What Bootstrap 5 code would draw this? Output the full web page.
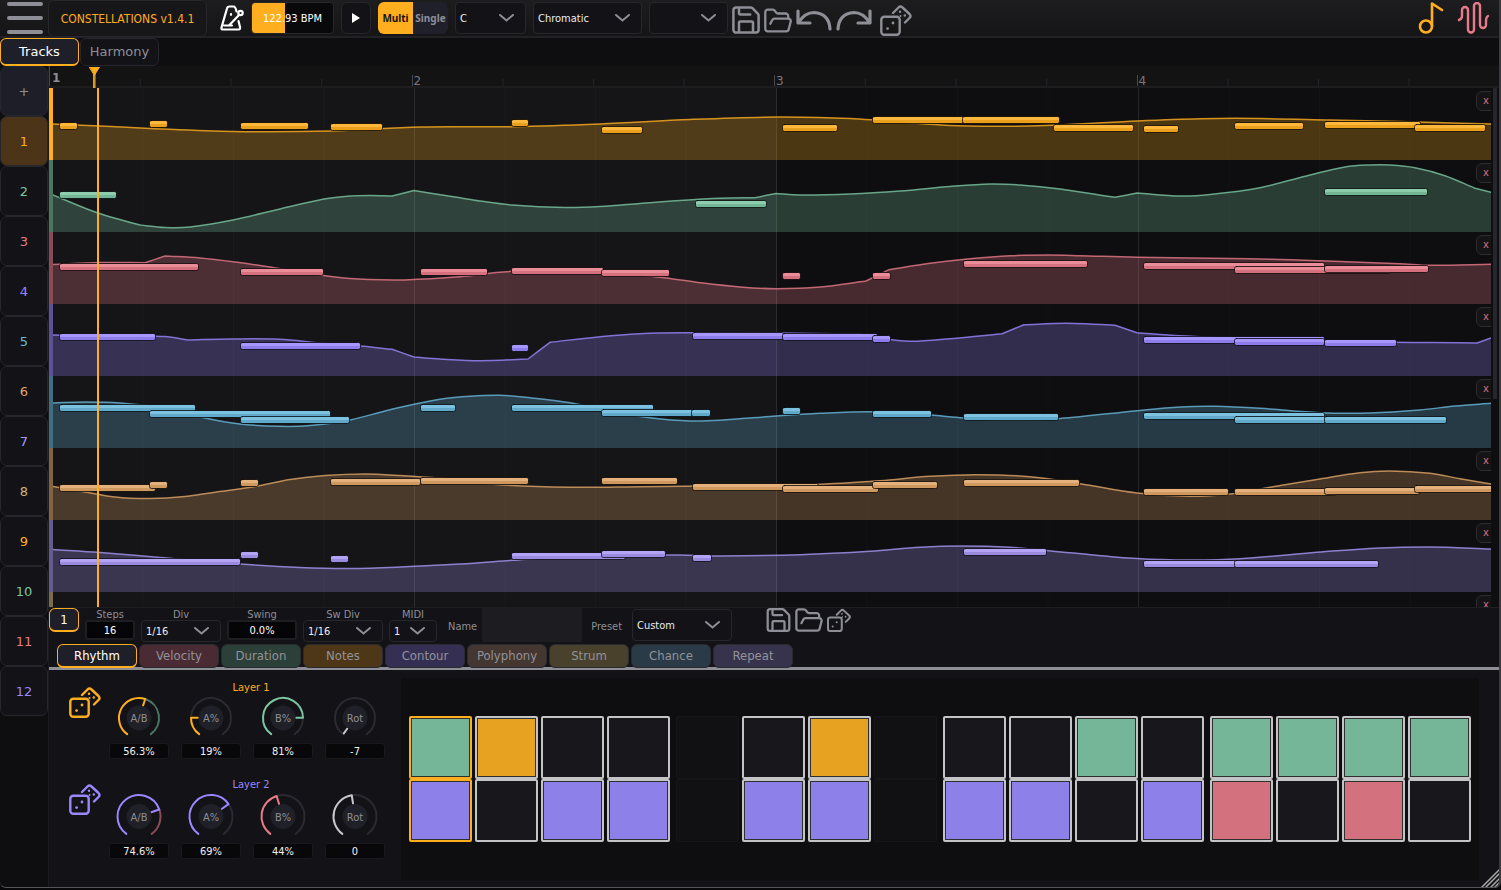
<!DOCTYPE html>
<html lang="en" data-bs-theme="dark">
<head>
<meta charset="utf-8">
<meta name="viewport" content="width=device-width, initial-scale=1">
<title>Constellations</title>
<link rel="stylesheet" href="https://cdn.jsdelivr.net/npm/bootstrap@5.3.0/dist/css/bootstrap.min.css">
<style>
:root{--amber:#ffae20;--green:#7cc6a2;--rose:#e87b8a;--violet:#9a87ff;--sky:#6ab8dc;--sand:#e0a568;--lilac:#a897f5;--khaki:#cbb77c;--ash:#8e8e96;--line:#26262c;--panel:#121217;--ink:#0e0e10}
body{background:#08080a;color:#ececee;font:11px/14px "DejaVu Sans Condensed","DejaVu Sans",sans-serif}
button,input,select{font:inherit;color:inherit;padding:0}
svg{display:block;fill:none;stroke:currentColor;stroke-linecap:round;stroke-linejoin:round}
.app{background:var(--ink);border-right:2px solid #3a3a3f;border-bottom:1px solid #55555a;border-radius:0 0 6px 6px;margin-bottom:2px;height:calc(100vh - 2px);overflow:hidden}
.grey{color:var(--ash)}
.icon-btn{background:none;border:0;color:var(--ash)}
.topbar{height:38px;background:linear-gradient(#1d1d20,#151517);border-bottom:2px solid #222226}
.burger{width:48px;height:36px;padding:2px 5px 2px 7px}
.burger span{height:4px;border-radius:2px;background:var(--ash)}
.brand-box{width:159px;height:37px;border:1px solid var(--line);border-radius:6px;font-size:12px;color:var(--amber);background:#17171a}
.transport{padding:2px 0 0 13px;gap:7px}
.modes{padding:2px 9px 0 0;gap:13px}
.ctl{height:32px;border:1px solid var(--line);border-radius:4px;background-color:var(--panel)}
.play{width:30px;border-radius:6px}
.bpm{width:83px;border:1px solid var(--line);background:linear-gradient(90deg,var(--amber) 41%,#09090b 41%);text-align:center;color:#fff}
.seg{width:70px;border-radius:6px;overflow:hidden;font:bold 10px/14px "Noto Sans",sans-serif}
.seg button{border:0;background:#20202a;color:var(--ash);flex:1}
.seg .on{background:var(--amber);color:#17130a}
.pick{appearance:none;border:1px solid var(--line);border-radius:4px;padding:2px 0 0 4px;background:var(--panel) url("data:image/svg+xml,%3Csvg xmlns='http://www.w3.org/2000/svg' width='15' height='8'%3E%3Cpath d='M1 1l6.500 5.500L14 1' fill='none' stroke='%238e8e96' stroke-width='2' stroke-linecap='round'/%3E%3C/svg%3E") no-repeat right 11px center}
.view-tab{width:79px;height:28px;border:1px solid var(--line);border-radius:6px;background:var(--panel);color:var(--ash);font:13px/16px "DejaVu Sans",sans-serif}
.on-tab{background:#1f1f29;border:1px solid var(--amber);border-bottom-width:2px;color:#fff}
.side{width:49px;border-right:1px solid #1d1d21}
.side button{width:48px;height:50px;flex:none;border:1px solid #26262d;border-width:1px 1px;border-radius:7px;background:var(--panel);font:13px/16px "DejaVu Sans",sans-serif;padding-top:2px}
.side .add{background:#1e1e28;color:var(--ash)}
.side .sel{background:#4b3417}
.ruler{height:22px;background:#131313;border-bottom:2px solid #1d1d1f}
.bar-no{padding:8px 0 0 2px;font:12px/14px "DejaVu Sans",sans-serif;color:#77777d;background:linear-gradient(#48484e,#48484e) 0 100%/1px 11px no-repeat,linear-gradient(90deg,#242427 1px,transparent 1px) 0 100%/25% 7px repeat-x}
.bar-no:first-child{padding:5px 0 0 3px;font-weight:bold;color:var(--ash);background-size:1px 22px,25% 7px}
.head-mark{position:absolute;left:40px;top:1px;color:var(--amber)}
.head-line{position:absolute;left:48px;top:0;bottom:0;width:2px;background:var(--amber)}
.lanes{min-height:0;flex:1 1 0}
.lane{height:72px;flex:none;border-left:4px solid}
.lane svg{width:100%;height:72px}
.lane-x{position:absolute;right:-5px;top:3px;width:20px;height:20px;border:1px solid #2b2b30;border-radius:6px;background:#151518;color:#d96f7e;line-height:14px}
.vscroll{width:8px}
.vscroll span{width:4px;height:60%;background:#26262f}
.lower{background:var(--panel);border-top:1px solid #1d1d22}
.settings{height:36px;gap:6px}
.trk{width:30px;height:24px;border-radius:6px;font-size:13px}
.field{line-height:14px;color:var(--ash)}
.field label{height:12px}
.field .num{height:20px;border:2px solid #1e1e22;border-radius:3px;background:#050507;text-align:center;color:#fff;padding-top:1px}
.field .pick{height:22px;color:#eee;padding-top:1px}
.w50{width:50px}.w70{width:70px}.w80{width:80px}.w48{width:48px}.w100{width:100px}
.naming{gap:5px;padding-left:5px}
.naming .pick{margin-left:5px}
.presets{padding-left:28px}
.named{height:34px;border:0;background:#1c1c21}
.edit-tabs{border-bottom:3px solid var(--ash);padding-left:8px;gap:2px}
.edit-tabs button{width:80px;height:24px;border:1px solid #2a2a31;border-radius:6px;font-size:13px;color:#92929a;margin-bottom:-1px}
.edit-tabs .on-tab{border:1px solid var(--amber);border-bottom-width:2px;color:#fff}
.knobs{width:352px;padding:11px 9px 0 20px}
.layer{height:97px}
.layer .icon-btn{margin:5px 2px 0 0}
.dial{width:72px}
.dial input{width:60px;height:16px;border:1px solid #1a1a1e;border-radius:3px;background:#08080a;text-align:center;color:#f0f0f0;padding-top:1px}
.dial text{stroke:none;fill:var(--ash);text-anchor:middle;font-size:11px}
.label-l{line-height:14px;height:12px;padding-left:8px}
.board{background:var(--ink);margin:8px 20px 7px 0;padding:0 8px;height:202px;gap:6px}
.beat{display:grid;grid-template-columns:repeat(4,1fr);column-gap:3px;flex:1}
.cell{height:63px;border:2px solid #c4c4c6;border-radius:2px;background:#18181c}
.cell.off{border:1px solid #16161a;background:#111113}
.cell.now{border-color:var(--amber)}
.c-g,.c-o,.c-v,.c-r{box-shadow:inset 0 0 0 1px #2e3030}
.c-g{background:#74b697}.c-o{background:#e8a222}.c-v{background:#8d80e8}.c-r{background:#d3717f}
.grip{position:absolute;right:0;bottom:0;color:#aaa}
</style>
</head>
<body>
<svg width="0" height="0" class="position-absolute" aria-hidden="true">
  <symbol id="dice" viewBox="0 0 32 32"><rect x="1.300" y="12.700" width="18.400" height="18" rx="3"/><path d="M13 9l5.500-5.500q2-2 4 0l7 6.500q2 2 0 4l-4.500 4.500"/><g fill="currentColor" stroke="none"><circle cx="13" cy="19" r="1.400"/><circle cx="7.600" cy="24.600" r="1.400"/><circle cx="20" cy="7.700" r="1.200"/><circle cx="24.800" cy="11.500" r="1.200"/><circle cx="20.500" cy="12" r="1"/></g></symbol>
  <symbol id="disk" viewBox="2 2 20 20"><path d="M15.200 3a2 2 0 0 1 1.400.6l3.800 3.800a2 2 0 0 1 .6 1.400V19a2 2 0 0 1-2 2H5a2 2 0 0 1-2-2V5a2 2 0 0 1 2-2zM17 21v-7a1 1 0 0 0-1-1H8a1 1 0 0 0-1 1v7M7 3v4a1 1 0 0 0 1 1h7"/></symbol>
  <symbol id="folder" viewBox="1 2 22 19"><path d="M6 14l1.500-2.900A2 2 0 0 1 9.240 10H20a2 2 0 0 1 1.940 2.500l-1.540 6a2 2 0 0 1-1.950 1.500H4a2 2 0 0 1-2-2V5a2 2 0 0 1 2-2h3.900a2 2 0 0 1 1.690.9l.81 1.200a2 2 0 0 0 1.670.9H18a2 2 0 0 1 2 2v2"/></symbol>
  <symbol id="undo" viewBox="0 0 36 23"><path d="M2 2v12h12M2.500 13.500Q9 3.500 18 3.500 33 4.500 34 20"/></symbol>
</svg>

<div class="app d-flex flex-column position-relative">
  <header class="topbar d-flex align-items-start flex-shrink-0">
    <button class="icon-btn burger d-flex flex-column justify-content-between" aria-label="Menu"><span class="w-100"></span><span class="w-100"></span><span class="w-100"></span></button>
    <div class="brand-box d-flex align-items-center justify-content-center">CONSTELLATIONS v1.4.1</div>
    <div class="transport d-flex align-items-center">
      <button class="icon-btn text-white" aria-label="Metronome"><svg width="24" height="26" viewBox="0 0 24 26" stroke-width="2.200"><path d="M16.500 6.500Q15.500 1.500 13.500 1.500H9.500Q7.500 1.500 7 3.500L1.500 22.500Q1 24.500 3 24.500H18.500Q20.500 24.500 20 22L18.500 16M9 20.500L19 10M4 20.500H12M11 9v.8"/><circle cx="20.500" cy="8" r="2.200"/></svg></button>
      <input class="ctl bpm" aria-label="Tempo" value="122.93 BPM">
      <button class="ctl play" aria-label="Play"><svg class="mx-auto" width="10" height="12" viewBox="0 0 10 12"><path d="M1 1v10l8-5z" fill="#fff" stroke="none"/></svg></button>
      <div class="seg ctl border-0 d-flex"><button class="on">Multi</button><button>Single</button></div>
      <select class="ctl pick" style="width:71px" aria-label="Key"><option>C</option></select>
      <select class="ctl pick" style="width:109px" aria-label="Scale"><option>Chromatic</option></select>
      <select class="ctl pick" style="width:79px" aria-label="Variation"><option></option></select>
    </div>
    <div class="d-flex align-items-center gap-1 ps-1 pt-1">
      <button class="icon-btn" aria-label="Save"><svg width="28" height="28" stroke-width="1.800"><use href="#disk"/></svg></button>
      <button class="icon-btn" aria-label="Open"><svg width="28" height="25" stroke-width="1.800"><use href="#folder"/></svg></button>
      <button class="icon-btn" aria-label="Undo"><svg width="36" height="23" stroke-width="3.200"><use href="#undo"/></svg></button>
      <button class="icon-btn" aria-label="Redo"><svg width="36" height="23" viewBox="0 0 36 23" stroke-width="3.200"><path d="M34 2v12H22M33.500 13.500Q27 3.500 18 3.500 3 4.500 2 20"/></svg></button>
      <button class="icon-btn ms-1" aria-label="Randomize"><svg width="32" height="32" stroke-width="2.400"><use href="#dice"/></svg></button>
    </div>
    <div class="modes d-flex ms-auto">
      <button class="icon-btn" style="color:var(--amber)" aria-label="Notes"><svg width="26" height="33" viewBox="0 0 26 33" stroke-width="2.600"><circle cx="8" cy="24.500" r="6"/><path d="M14 24V1.500l10 6.500"/></svg></button>
      <button class="icon-btn" style="color:var(--rose)" aria-label="Modulation"><svg width="33" height="33" viewBox="0 0 33 33" stroke-width="2.400"><path d="M2 18q3-1 3-4V8a3 3 0 0 1 6 0V27.500a3 3 0 0 0 6 0V4a3 3 0 0 1 6 0V23a3 3 0 0 0 6 0V19q0-4 2-5"/></svg></button>
    </div>
  </header>

  <nav class="d-flex" style="gap:1px" aria-label="Views">
    <button class="view-tab on-tab">Tracks</button><button class="view-tab">Harmony</button>
  </nav>

  <div class="d-flex flex-grow-1" style="min-height:0">
    <aside class="side d-flex flex-column flex-shrink-0" id="side"><button class="add" aria-label="Add track">+</button></aside>
    <main class="d-flex flex-column flex-grow-1" style="min-width:0">
      <div class="ruler d-flex position-relative flex-shrink-0">
        <div class="bar-no flex-fill w-25">1</div><div class="bar-no flex-fill w-25">2</div><div class="bar-no flex-fill w-25">3</div><div class="bar-no flex-fill w-25">4</div>
        <svg class="head-mark" width="11" height="21" viewBox="0 0 11 21" stroke="none"><path d="M.5 0h10L5.500 8z" fill="currentColor"/><path d="M5 7h1v14H5z" fill="currentColor" fill-opacity=".6"/></svg>
      </div>
      <div class="lanes d-flex">
        <div class="flex-grow-1 d-flex flex-column overflow-hidden position-relative" id="lanes"></div>
        <div class="vscroll d-flex justify-content-center flex-shrink-0"><span></span></div>
      </div>

      <section class="lower flex-shrink-0">
        <div class="settings d-flex align-items-start">
          <button class="trk on-tab">1</button>
          <div class="field d-flex flex-column align-items-center pt-px ps-px"><label for="steps">Steps</label><input id="steps" class="num w50 mt-px" value="16"></div>
          <div class="field d-flex flex-column align-items-center"><label for="div">Div</label><select id="div" class="pick w80"><option>1/16</option></select></div>
          <div class="field d-flex flex-column align-items-center"><label for="swing">Swing</label><input id="swing" class="num w70 mt-px" value="0.0%"></div>
          <div class="field d-flex flex-column align-items-center"><label for="swdiv">Sw Div</label><select id="swdiv" class="pick w80"><option>1/16</option></select></div>
          <div class="field d-flex flex-column align-items-center"><label for="midi">MIDI</label><select id="midi" class="pick w48"><option>1</option></select></div>
          <div class="naming d-flex align-items-center"><label class="grey pt-1" for="name">Name</label><input id="name" class="named w100">
          <label class="grey ms-1 pt-1" for="preset">Preset</label><select id="preset" class="pick ctl w100"><option>Custom</option></select></div>
          <div class="presets d-flex align-items-start gap-1">
            <button class="icon-btn" aria-label="Save preset"><svg width="25" height="24" stroke-width="1.900"><use href="#disk"/></svg></button>
            <button class="icon-btn" aria-label="Open preset"><svg width="28" height="24" stroke-width="1.800"><use href="#folder"/></svg></button>
            <button class="icon-btn" aria-label="Randomize track"><svg width="24" height="24" stroke-width="2.700"><use href="#dice"/></svg></button>
          </div>
        </div>
        <nav class="edit-tabs d-flex" id="tabs" aria-label="Editors"></nav>
        <div class="d-flex">
          <div class="knobs flex-shrink-0" id="knobs"></div>
          <div class="board flex-grow-1 d-flex align-items-center" id="board"></div>
        </div>
      </section>
    </main>
  </div>
  <svg class="grip" width="18" height="18" viewBox="0 0 18 18" stroke-width="1.500"><path d="M1 18L18 1M5 18L18 5M10 18l8-8M14 18l4-4"/></svg>
</div>

<script src="https://cdn.jsdelivr.net/npm/bootstrap@5.3.0/dist/js/bootstrap.bundle.min.js"></script>
<script>
const C = {amber:'#ffae20',green:'#7cc6a2',rose:'#e87b8a',violet:'#9a87ff',sky:'#6ab8dc',sand:'#e0a568',lilac:'#a897f5',khaki:'#cbb77c',white:'#c8c8cc'};
const byId = id => document.getElementById(id);

/* sidebar track numbers */
['amber','green','rose','violet','sky','sand','lilac','khaki','amber','green','rose','violet'].forEach((c, i) =>
  byId('side').insertAdjacentHTML('beforeend', `<button class="${i ? '' : 'sel'}" style="color:${C[c]}">${i + 1}</button>`));

/* each lane: colour, top, contour points (x,y) and notes (start,end,centre) */
const lanes = [
 ['amber',88,[53,124,100,126,150,128.5,233,131.5,330,131,420,127,512,126.700,600,124,690,119.500,776,117,850,118.500,950,125.500,1005,126.300,1060,125,1137,121,1200,118.700,1260,118.500,1330,120,1400,121.500,1491,124],
  [60,77,126,150,167,124,241,308,126,331,382,127,512,528,123,602,642,130,783,837,128,873,963,120,963,1059,120,1054,1133,127.500,1144,1178,129,1235,1303,125.500,1325,1420,125,1415,1485,127.500]],
 ['green',160,[53,195,98,213,140,225,165,227.500,190,227,233,220,280,209,324,199,350,196,370,195.500,392,196,414,190.500,455,197,480,201,512,205,565,207.500,600,206.500,640,203.500,680,200.500,720,198.300,755,197.700,776,193.500,800,195,850,194,900,191,950,186.500,990,184,1020,185,1060,189,1115,197.300,1137,193,1180,196,1210,194.500,1260,187.700,1310,175,1345,167,1370,165,1390,165,1415,167.700,1445,175.700,1475,188.300,1491,192.300],
  [60,116,195,696,766,204,1325,1427,191.700]],
 ['rose',232,[53,264.500,100,262.500,145,262.700,165,256,200,258,235,262,270,267,320,275,350,278.500,395,280,414,279.500,460,276.700,500,272.300,550,269,600,271,660,277.300,700,282.700,740,287,776,288.700,820,287,866,281,889,269.700,930,263.300,970,258.700,1010,255.700,1050,255,1080,255.700,1137,257.300,1250,258.700,1320,260.700,1400,263.700,1430,265.300,1491,264.300],
  [60,198,267,241,323,271.500,421,487,272,512,603,270.500,602,669,273,783,800,276,873,890,276,964,1087,264,1144,1324,265.500,1235,1391,270,1325,1428,268.500]],
 ['violet',304,[53,335,80,335.500,165,336.500,188,340,230,339,280,339.300,320,343,360,346,392,349.300,414,357,440,359,480,360.700,528,359,550,342.300,600,336.700,640,333.700,680,332.700,780,333,860,334,880,338.300,911,341.300,950,338.700,1002,333.700,1024,324.700,1065,323.300,1090,324,1115,325.300,1137,332.700,1180,335.700,1230,338,1300,341,1390,342.300,1430,342.500,1477,343,1491,338],
  [60,155,337,241,360,346,512,528,348,693,783,336,783,877,337,873,890,339,1144,1324,340,1235,1324,342,1325,1396,342.500]],
 ['sky',376,[53,403,85,402,120,403,165,408,205,418,240,424,280,426.300,310,425.500,350,420,385,411,414,404.300,440,399.300,470,396.300,500,395.300,530,397.700,570,402.700,620,412.700,650,417.700,690,421,720,420.300,776,416,820,413.300,870,411.700,920,414,960,417.700,1010,420,1060,418.500,1137,410.700,1180,407,1215,406.300,1260,408.300,1320,412.700,1370,413,1420,410,1455,406,1491,403.300],
  [60,195,407.500,150,330,414,241,349,420,421,455,408,512,653,408,602,692,412.500,692,710,412.500,783,800,410.500,873,931,414,964,1058,417,1144,1324,415.500,1235,1325,420,1325,1446,420]],
 ['sand',448,[53,486.500,80,491,115,497,150,498.500,185,496.500,220,491.500,255,486.500,290,479.500,325,475.500,365,474,400,475.500,440,478.300,500,484.700,570,487.300,640,486.700,700,486,780,486,825,484,880,480.700,930,476.300,978,474.700,1030,476.700,1080,483.700,1137,493,1190,496.300,1230,494,1270,487.300,1320,479,1360,472.700,1390,471,1430,473.300,1460,478.700,1491,484],
  [60,155,488,150,167,485.300,241,258,483,331,420,482.300,421,528,480.500,602,677,481,693,818,487,783,878,489,873,937,485,964,1079,483,1144,1228,492,1235,1336,492,1325,1419,490.500,1415,1495,489]],
 ['lilac',520,[53,549.500,100,552.500,160,557.500,240,564,300,567.500,350,568.500,400,567,460,564,512,560.300,560,557,620,555.300,680,555,720,556,800,554.700,870,551.300,920,547.300,960,546,1010,547.300,1070,552.700,1137,558.500,1190,560,1240,558.700,1320,552,1380,548,1430,547,1491,549],
  [60,240,562.300,241,258,555,331,348,558.500,512,625,556,602,665,553.500,693,711,557.500,964,1046,552,1144,1235,564,1235,1378,564]],
 ['khaki',592,[],[]]
];
/* smooth path through the points; where the slope breaks sharply the corner is kept */
function curve(p, top) {
  const q = []; for (let i = 0; i < p.length; i += 2) q.push([p[i], p[i + 1] - top]);
  const s = (m, n) => (n[1] - m[1]) / (n[0] - m[0]);
  const slope = (i, own) => {
    if (!i || i === q.length - 1) return own;
    const l = s(q[i - 1], q[i]), r = s(q[i], q[i + 1]);
    return Math.abs(l - r) > .17 ? own : s(q[i - 1], q[i + 1]);
  };
  let d = `M${q[0]}`;
  for (let i = 0; i < q.length - 1; i++) {
    const b = q[i], c = q[i + 1], w = c[0] - b[0], own = s(b, c);
    d += `C${b[0] + w / 3} ${b[1] + slope(i, own) * w / 3} ${c[0] - w / 3} ${c[1] - slope(i + 1, own) * w / 3} ${c[0]} ${c[1]}`;
  }
  return d;
}
byId('lanes').innerHTML = lanes.map(([c, top, pts, notes], n) => {
  const col = C[c]; let s = '<rect x="53" width="724" height="72" fill="#151517" stroke="none"/>';
  for (let k = 1; k < 16; k++) s += `<path d="M${52.5 + k * 90.5} 0v72" stroke="#fff" stroke-opacity="${k % 4 ? .025 : .1}"/>`;
  if (pts.length) {
    const d = curve(pts, top);
    s += `<path d="${d}V72H53z" fill="${col}" fill-opacity=".26" stroke="none"/><path d="${d}" stroke-width="1.500" stroke-opacity=".8"/>`;
  }
  for (let i = 0; i < notes.length; i += 3) {
    const [a, b, y] = notes.slice(i, i + 3), w = b - a, t = Math.round(y - top - 3);
    s += `<rect x="${a - .5}" y="${t - .5}" width="${w + 1}" height="7" rx="2" fill="${col}" stroke="#000" stroke-opacity=".75"/><rect x="${a}" y="${t + 3}" width="${w}" height="3" fill="#000" fill-opacity=".08" stroke="none"/><rect x="${a}" y="${t}" width="${w}" height="3" fill="#fff" fill-opacity=".13" stroke="none"/>`;
  }
  return `<div class="lane position-relative overflow-hidden" style="border-color:${col}${n ? '90' : ''};color:${col}"><svg viewBox="53 0 1438 72" preserveAspectRatio="none">${s}</svg><button class="lane-x" aria-label="Remove track ${n + 1}">x</button></div>`;
}).join('') + '<div class="head-line"></div>';

/* editor tabs */
[['Rhythm',''],['Velocity','#4a2b33'],['Duration','#2b4038'],['Notes','#4d3717'],['Contour','#353053'],['Polyphony','#443630'],['Strum','#49412b'],['Chance','#2a3a46'],['Repeat','#38334d']].forEach(([t, c], i) =>
  byId('tabs').insertAdjacentHTML('beforeend', i ? `<button style="background:${c}">${t}</button>` : `<button class="on-tab">${t}</button>`));

/* rotary dials: label, value text, position 0..1, colour, colour of the rest */
const layers = [
 ['Layer 1','amber',50,20,[['A/B','56.3%',.563,'amber','green'],['A%','19%',.19,'amber'],['B%','81%',.81,'green'],['Rot','-7',0,'white']]],
 ['Layer 2','violet',53,21.500,[['A/B','74.6%',.746,'violet','rose'],['A%','69%',.69,'violet'],['B%','44%',.44,'rose'],['Rot','0',.47,'white']]]
];
function dial([lab, val, v, c, rest], h, r, name) {
  const y = h / 2, at = (f, q) => { const a = (-144 + 288 * f) * Math.PI / 180; return [36 + q * Math.sin(a), y - q * Math.cos(a)].map(n => n.toFixed(2)).join(' '); };
  const arc = (f, g) => `M${at(f, r)}A${r} ${r} 0 ${(g - f) * 288 > 180 ? 1 : 0} 1 ${at(g, r)}`;
  return `<div class="dial d-flex flex-column align-items-center"><svg width="72" height="${h}" stroke-width="2" stroke-linecap="butt"><path d="${arc(v, 1)}" stroke="${rest ? C[rest] : '#2a2a30'}" stroke-opacity="${rest ? .55 : 1}"/>${v ? `<path d="${arc(0, v)}" stroke="${C[c]}"/>` : ''}<path d="M${at(v, 13)}L${at(v, r - 1)}" stroke="${C[c]}"/><circle cx="36" cy="${y}" r="12.500" fill="#202028" stroke="none"/><text x="36" y="${y + 4}">${lab}</text></svg><input aria-label="${name} ${lab}" value="${val}"></div>`;
}
byId('knobs').innerHTML = layers.map(([name, c, h, r, ds]) =>
  `<div class="layer d-flex align-items-start"><button class="icon-btn" style="color:${C[c]}" aria-label="Randomize ${name}"><svg width="32" height="32" stroke-width="2.400"><use href="#dice"/></svg></button><div><div class="label-l text-center" style="color:${C[c]}">${name}</div><div class="d-flex">${ds.map(d => dial(d, h, r, name)).join('')}</div></div></div>`).join('');

/* step board: g o v r = lit, e = empty, - = muted */
const rows = ['goee-eo-eegegggg', 'vevv-vv-vvevrere'];
byId('board').innerHTML = [0, 1, 2, 3].map(g => `<div class="beat">${rows.map((row, r) => [...row.slice(g * 4, g * 4 + 4)].map((k, i) =>
  `<button class="cell ${k === '-' ? 'off' : 'c-' + k} ${g + i ? '' : 'now'}" aria-label="Layer ${r + 1} step ${g * 4 + i + 1}"></button>`).join('')).join('')}</div>`).join('');
</script>
</body>
</html>
